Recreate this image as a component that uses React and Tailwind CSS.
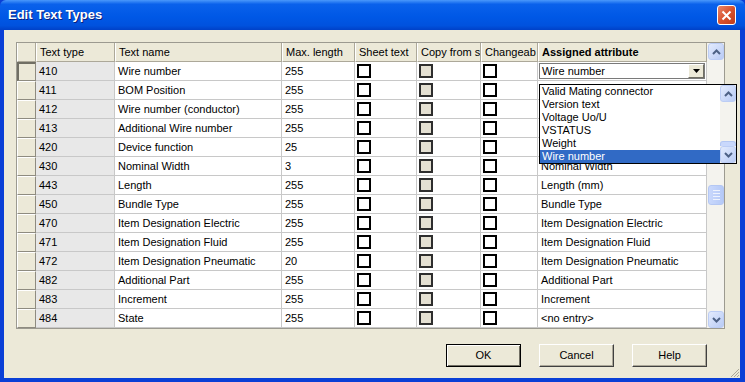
import React from 'react';

// attr is left empty where the open list hides the cell
const rows = [
    { type: '410', name: 'Wire number', len: '255', attr: 'Wire number' },
    { type: '411', name: 'BOM Position', len: '255', attr: '' },
    { type: '412', name: 'Wire number (conductor)', len: '255', attr: '' },
    { type: '413', name: 'Additional Wire number', len: '255', attr: '' },
    { type: '420', name: 'Device function', len: '25', attr: '' },
    { type: '430', name: 'Nominal Width', len: '3', attr: 'Nominal Width' },
    { type: '443', name: 'Length', len: '255', attr: 'Length (mm)' },
    { type: '450', name: 'Bundle Type', len: '255', attr: 'Bundle Type' },
    { type: '470', name: 'Item Designation Electric', len: '255', attr: 'Item Designation Electric' },
    { type: '471', name: 'Item Designation Fluid', len: '255', attr: 'Item Designation Fluid' },
    { type: '472', name: 'Item Designation Pneumatic', len: '20', attr: 'Item Designation Pneumatic' },
    { type: '482', name: 'Additional Part', len: '255', attr: 'Additional Part' },
    { type: '483', name: 'Increment', len: '255', attr: 'Increment' },
    { type: '484', name: 'State', len: '255', attr: '<no entry>' },
];

const listItems = ['Valid Mating connector', 'Version text', 'Voltage Uo/U', 'VSTATUS', 'Weight', 'Wire number'];

const font = "font-['Liberation_Sans',Arial,sans-serif]";

// xp style scroll arrow
const ScrollBtn = ({ dir, h = 'h-[17px]' }) => (
    <div className={`w-[16px] ${h} shrink-0 rounded-[3px] border border-[#bccdf5] bg-gradient-to-br from-[#e3ebfd] to-[#b9cbf5] flex items-center justify-center`}>
        <svg width="9" height="6" viewBox="0 0 9 6">
            <path d={dir === 'up' ? 'M1 5 L4.5 1.5 L8 5' : 'M1 1 L4.5 4.5 L8 1'} stroke="#4d6185" strokeWidth="2" fill="none" />
        </svg>
    </div>
);

const CheckBox = ({ grey }) => (
    <div className={`w-[14px] h-[14px] border-2 ${grey ? 'border-[#2e2e2e] bg-[#e4e0d2]' : 'border-black bg-white'}`} />
);

const cell = 'h-[19px] border-r border-b border-[#c8c8c8] flex items-center whitespace-nowrap overflow-hidden';
const head = 'h-[19px] border-r border-b border-[#aca899] border-l border-l-white bg-[#ece9d8] flex items-center whitespace-nowrap overflow-hidden pl-[3px]';

const App = () => {
    return (
        <div className={`w-[745px] h-[382px] flex flex-col bg-[#0a3fd6] text-[11px] text-black ${font}`}>
            {/* title bar */}
            <div className="h-[30px] shrink-0 flex items-center justify-between pl-[8px] pr-[9px] rounded-t-[6px] bg-[linear-gradient(to_bottom,#4a98fb_0%,#0a61eb_14%,#0058e6_55%,#0052de_85%,#0041c8_100%)]">
                <span className="text-white font-bold text-[13px] [text-shadow:1px_1px_0_#0a1e7a]">Edit Text Types</span>
                <div className="w-[19px] h-[20px] rounded-[3px] border border-white bg-gradient-to-br from-[#e8866a] via-[#d9522d] to-[#c03c1a] flex items-center justify-center">
                    <svg width="11" height="11" viewBox="0 0 11 11">
                        <path d="M1.5 1.5 L9.5 9.5 M9.5 1.5 L1.5 9.5" stroke="white" strokeWidth="2" />
                    </svg>
                </div>
            </div>

            {/* client area */}
            <div className="relative flex-1 flex flex-col bg-[#ece9d8] ml-[4px] mr-[5px] mb-[4px] pl-[12px] pt-[12px]">
                <div className="relative w-[709px] border border-[#9c9a90] bg-white flex">
                    <div>
                        <div className="grid grid-cols-[19px_79px_167px_73px_62px_64px_57px_169px]">
                            <div className={head}></div>
                            <div className={head}>Text type</div>
                            <div className={head}>Text name</div>
                            <div className={head}>Max. length</div>
                            <div className={head}>Sheet text</div>
                            <div className={head}>Copy from s</div>
                            <div className={head}>Changeab</div>
                            <div className={`${head} font-bold`}>Assigned attribute</div>

                            {rows.map((r, i) => (
                                <React.Fragment key={r.type}>
                                    <div className={`h-[19px] bg-[#ece9d8] border-r border-b border-[#8e8b80] ${i === 0 ? 'border-l-2 border-t-2 border-l-[#716f64] border-t-[#716f64]' : 'border-l border-t border-l-white border-t-white'}`} />
                                    <div className={`${cell} bg-[#e8e8e8] pl-[3px]`}>{r.type}</div>
                                    <div className={`${cell} pl-[3px]`}>{r.name}</div>
                                    <div className={`${cell} pl-[3px]`}>{r.len}</div>
                                    <div className={`${cell} pl-[2px]`}><CheckBox /></div>
                                    <div className={`${cell} pl-[2px]`}><CheckBox grey /></div>
                                    <div className={`${cell} pl-[2px]`}><CheckBox /></div>
                                    {i === 0 ? (
                                        <div className={`${cell} p-px`}>
                                            <div className="flex-1 h-full flex items-center border border-[#7a7a7a] bg-white">
                                                <span className="flex-1 pl-[2px]">{r.attr}</span>
                                                <div className="w-[16px] h-full bg-[#ece9d8] border-l border-t border-white border-r border-b border-r-[#716f64] border-b-[#716f64] flex items-center justify-center">
                                                    <svg width="7" height="4" viewBox="0 0 7 4"><path d="M0 0 H7 L3.5 4 Z" fill="black" /></svg>
                                                </div>
                                            </div>
                                        </div>
                                    ) : (
                                        <div className={`${cell} pl-[3px]`}>{r.attr}</div>
                                    )}
                                </React.Fragment>
                            ))}
                        </div>
                    </div>

                    {/* grid scrollbar */}
                    <div className="w-[17px] flex flex-col bg-[#f4f3ee] pl-px">
                        <ScrollBtn dir="up" />
                        <div className="mt-[125px] w-[16px] h-[20px] rounded-[3px] border border-[#b4c7f3] bg-gradient-to-r from-[#c9d8fc] to-[#b5c9f7] flex flex-col items-center justify-center gap-[2px]">
                            <div className="w-[7px] h-px bg-[#eef3fe]" />
                            <div className="w-[7px] h-px bg-[#eef3fe]" />
                            <div className="w-[7px] h-px bg-[#eef3fe]" />
                            <div className="w-[7px] h-px bg-[#eef3fe]" />
                        </div>
                        <div className="flex-1" />
                        <ScrollBtn dir="down" />
                    </div>

                    {/* open dropdown list */}
                    <div className="absolute left-[522px] top-[41px] w-[198px] h-[80px] border border-black bg-white flex">
                        <div className="flex-1 flex flex-col">
                            {listItems.map((item) => (
                                <div
                                    key={item}
                                    className={`h-[13px] leading-[13px] pl-[2px] ${item === 'Wire number' ? 'bg-[#316ac5] text-white' : ''}`}
                                >
                                    {item}
                                </div>
                            ))}
                        </div>
                        <div className="w-[16px] flex flex-col bg-[#f4f3ee]">
                            <ScrollBtn dir="up" />
                            <div className="flex-1" />
                            <div className="w-[16px] h-[5px] rounded-t-[3px] border border-b-0 border-[#b4c7f3] bg-[#c9d8fc]" />
                            <ScrollBtn dir="down" />
                        </div>
                    </div>
                </div>

                {/* buttons */}
                <div className="flex justify-end gap-[18px] mt-[15px] pr-[33px]">
                    {['OK', 'Cancel', 'Help'].map((b) => (
                        <button
                            key={b}
                            className={`w-[75px] h-[23px] bg-[#ece9d8] text-[11px] ${b === 'OK' ? 'border border-black shadow-[inset_1px_1px_0_#fff,inset_-1px_-1px_0_#716f64]' : 'border border-t-white border-l-white border-r-[#404040] border-b-[#404040] shadow-[inset_-1px_-1px_0_#aca899]'}`}
                        >
                            {b}
                        </button>
                    ))}
                </div>

                {/* resize grip */}
                <svg className="absolute right-0 bottom-0" width="11" height="11" viewBox="0 0 11 11">
                    <path d="M10 2 L2 10 M10 5 L5 10 M10 8 L8 10" stroke="#aca899" strokeWidth="1" />
                </svg>
            </div>
        </div>
    );
};

export default App;
